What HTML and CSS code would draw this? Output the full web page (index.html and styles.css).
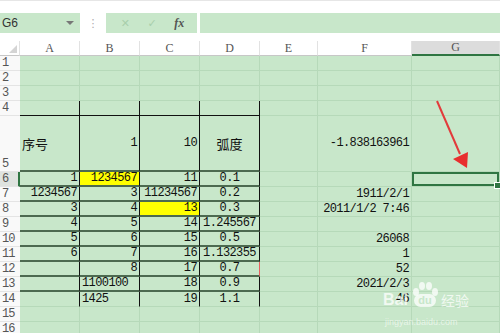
FILE: index.html
```html
<!DOCTYPE html>
<html lang="zh">
<head>
    <meta charset="UTF-8">
    <title>表格</title>
    <link rel="stylesheet" href="styles.css">
</head>
<body>
    <div class="toolbar">
        <div class="namebox">
            <span class="cellname">G6</span>
            <span class="drop"></span>
        </div>
        <div class="grip">⋮</div>
        <div class="fxbox">
            <span class="tool">✕</span>
            <span class="tool">✓</span>
            <span class="fx">fx</span>
        </div>
        <div class="formula"></div>
    </div>

    <table class="sheet">
        <colgroup>
            <col class="c-rh"><col class="c-a"><col class="c-b"><col class="c-c"><col class="c-d"><col class="c-e"><col class="c-f"><col class="c-g">
        </colgroup>
        <tr class="head">
            <th class="corner"><span class="tri"></span></th>
            <th>A</th><th>B</th><th>C</th><th>D</th><th>E</th><th>F</th><th class="on">G</th>
        </tr>
        <tr><th class="rn">1</th><td></td><td></td><td></td><td></td><td></td><td></td><td></td></tr>
        <tr><th class="rn">2</th><td></td><td></td><td></td><td></td><td></td><td></td><td></td></tr>
        <tr><th class="rn">3</th><td></td><td></td><td></td><td></td><td></td><td></td><td></td></tr>
        <tr class="above">
            <th class="rn">4</th><td class="tb"></td><td class="tb"></td><td class="tb"></td><td class="tb"></td><td></td><td></td><td></td>
        </tr>
        <tr class="tall">
            <th class="rn low">5</th>
            <td class="tb cn">序号</td><td class="tb num">1</td><td class="tb num">10</td><td class="tb mid cn">弧度</td>
            <td></td><td class="num">-1.838163961</td><td></td>
        </tr>
        <tr>
            <th class="rn cur">6</th>
            <td class="tb num">1</td><td class="tb num hl">1234567</td><td class="tb num">11</td><td class="tb mid">0.1</td>
            <td></td><td></td><td class="sel"></td>
        </tr>
        <tr>
            <th class="rn">7</th>
            <td class="tb num">1234567</td><td class="tb num">3</td><td class="tb num">11234567</td><td class="tb mid">0.2</td>
            <td></td><td class="num">1911/2/1</td><td></td>
        </tr>
        <tr>
            <th class="rn">8</th>
            <td class="tb num">3</td><td class="tb num">4</td><td class="tb num hl">13</td><td class="tb mid">0.3</td>
            <td></td><td class="num">2011/1/2 7:46</td><td></td>
        </tr>
        <tr>
            <th class="rn">9</th>
            <td class="tb num">4</td><td class="tb num">5</td><td class="tb num">14</td><td class="tb mid">1.245567</td>
            <td></td><td></td><td></td>
        </tr>
        <tr>
            <th class="rn">10</th>
            <td class="tb num">5</td><td class="tb num">6</td><td class="tb num">15</td><td class="tb mid">0.5</td>
            <td></td><td class="num">26068</td><td></td>
        </tr>
        <tr>
            <th class="rn">11</th>
            <td class="tb num">6</td><td class="tb num">7</td><td class="tb num">16</td><td class="tb mid">1.132355</td>
            <td></td><td class="num">1</td><td></td>
        </tr>
        <tr>
            <th class="rn">12</th>
            <td class="tb"></td><td class="tb num">8</td><td class="tb num">17</td><td class="tb mid flag">0.7</td>
            <td></td><td class="num">52</td><td></td>
        </tr>
        <tr>
            <th class="rn">13</th>
            <td class="tb"></td><td class="tb">1100100</td><td class="tb num">18</td><td class="tb mid">0.9</td>
            <td></td><td class="num">2021/2/3</td><td></td>
        </tr>
        <tr class="last">
            <th class="rn">14</th>
            <td class="tb"></td><td class="tb">1425</td><td class="tb num">19</td><td class="tb mid">1.1</td>
            <td></td><td class="num">46</td><td></td>
        </tr>
        <tr><th class="rn">15</th><td></td><td></td><td></td><td></td><td></td><td></td><td></td></tr>
        <tr><th class="rn">16</th><td></td><td></td><td></td><td></td><td></td><td></td><td></td></tr>
    </table>

    <svg class="arrow" width="500" height="333" viewBox="0 0 500 333">
        <line x1="437" y1="101" x2="460" y2="154" stroke="#e23b3b" stroke-width="2"/>
        <polygon points="467,168 453,159 468,152" fill="#e82e2e"/>
    </svg>

    <div class="mark">
        <span class="bai">Bai</span>
        <span class="paw">
            <i class="toe t1"></i><i class="toe t2"></i><i class="toe t3"></i><i class="toe t4"></i>
            <span class="pad">du</span>
        </span>
        <span class="jy">经验</span>
        <span class="url">jingyan.baidu.com</span>
    </div>
</body>
</html>
```
FILE: styles.css
```css
body {
    margin: 0;
    width: 500px;
    height: 333px;
    overflow: hidden;
    background-color: #ffffff;
    font-family: "Liberation Mono", monospace;
    position: relative;
}

.toolbar {
    display: flex;
    align-items: center;
    height: 20px;
    padding-top: 12px;
    margin-bottom: 8px;
    border-top: 1px solid #e6e6e6;
    box-sizing: content-box;
}

.namebox {
    width: 80px;
    height: 20px;
    background-color: #c8e7ca;
    display: flex;
    align-items: center;
    justify-content: space-between;
    box-sizing: border-box;
    padding: 0 6px 0 2px;
}

.cellname {
    font-family: "Liberation Sans", sans-serif;
    font-size: 12px;
    color: #333;
}

.drop {
    width: 0;
    height: 0;
    border-left: 4px solid transparent;
    border-right: 4px solid transparent;
    border-top: 4px solid #777;
}

.grip {
    width: 26px;
    text-align: center;
    color: #aaa;
    font-size: 11px;
    font-family: "DejaVu Sans", sans-serif;
}

.fxbox {
    width: 91px;
    height: 20px;
    background-color: #c8e7ca;
    display: flex;
    align-items: center;
    justify-content: space-around;
    padding: 0 4px 0 6px;
    box-sizing: border-box;
}

.tool {
    color: #a9cfac;
    font-size: 11px;
    font-family: "DejaVu Sans", sans-serif;
}

.fx {
    font-family: "Liberation Serif", serif;
    font-style: italic;
    font-weight: bold;
    font-size: 12px;
    color: #555;
}

.formula {
    flex: 1;
    height: 20px;
    margin-left: 3px;
    background-color: #c8e7ca;
}

.sheet {
    table-layout: fixed;
    border-collapse: separate;
    border-spacing: 0;
    width: 500px;
}

.c-rh { width: 20px; }
.c-a, .c-b, .c-c, .c-d { width: 60px; }
.c-e { width: 58px; }
.c-f { width: 94px; }
.c-g { width: 88px; }

th, td {
    box-sizing: border-box;
    height: 15px;
    padding: 0 2px;
    white-space: nowrap;
    overflow: visible;
    font-weight: normal;
    line-height: 13px;
}

td {
    background-color: #c8e7ca;
    border-right: 1px solid #b6d9b9;
    border-bottom: 1px solid #b6d9b9;
    font-size: 12px;
    letter-spacing: -0.6px;
    color: #111;
}

.head th {
    height: 14px;
    background-color: #ffffff;
    font-family: "Liberation Serif", serif;
    font-size: 12px;
    color: #555;
    border-right: 1px solid #e2e2e2;
    border-bottom: 1px solid #c7c7c7;
}

.head th.on {
    background-color: #dcdcdc;
    border-bottom: 2px solid #2f7542;
}

.corner {
    position: relative;
}

.tri {
    position: absolute;
    right: 2px;
    bottom: 2px;
    width: 0;
    height: 0;
    border-left: 8px solid transparent;
    border-bottom: 8px solid #d4d4d4;
}

.rn {
    background-color: #f9f9f9;
    border-bottom: 1px solid #e4e4e4;
    text-align: left;
    font-size: 12px;
    letter-spacing: -1px;
    color: #555;
    padding: 0 0 0 2px;
}

.rn.cur {
    background-color: #dfe3df;
    border-right: 2px solid #2f7542;
}

.rn.low {
    vertical-align: bottom;
}

.tall td, .tall th {
    height: 56px;
}

.num {
    text-align: right;
}

.mid {
    text-align: center;
}

.cn {
    font-family: "Noto Sans CJK SC", sans-serif;
    font-size: 13px;
    letter-spacing: 0;
}

.tb {
    border-right: 1px solid #111;
    border-bottom: 2px solid #4c6a50;
}

.above .tb {
    border-bottom: 1px solid #111;
}

.last .tb {
    border-bottom: 1px solid #b6d9b9;
}

.hl {
    background-color: #ffff00;
}

.flag {
    border-right-color: #e86060;
}

.sel {
    position: relative;
    box-shadow: inset 0 0 0 2px #2f7542;
}

.sel::after {
    content: "";
    position: absolute;
    right: -2px;
    bottom: -3px;
    width: 5px;
    height: 5px;
    background-color: #2f7542;
    border: 1px solid #fff;
}

.arrow {
    position: absolute;
    left: 0;
    top: 0;
}

.mark {
    position: absolute;
    left: 383px;
    top: 280px;
    width: 110px;
    height: 50px;
    color: rgba(255, 255, 255, 0.75);
}

.bai {
    position: absolute;
    left: 0;
    top: 11px;
    font-family: "Liberation Sans", sans-serif;
    font-weight: bold;
    font-size: 16px;
}

.paw {
    position: absolute;
    left: 28px;
    top: 0;
    width: 28px;
    height: 28px;
}

.toe {
    position: absolute;
    width: 6px;
    height: 8px;
    border-radius: 50%;
    background-color: rgba(255, 255, 255, 0.75);
}

.t1 { left: 2px; top: 8px; }
.t2 { left: 8px; top: 2px; }
.t3 { left: 15px; top: 2px; }
.t4 { left: 21px; top: 8px; }

.pad {
    position: absolute;
    left: 3px;
    top: 14px;
    width: 22px;
    height: 13px;
    border-radius: 7px;
    background-color: rgba(255, 255, 255, 0.75);
    color: #c8e7ca;
    font-family: "Liberation Sans", sans-serif;
    font-weight: bold;
    font-size: 11px;
    line-height: 13px;
    text-align: center;
}

.jy {
    position: absolute;
    left: 58px;
    top: 12px;
    font-family: "Noto Sans CJK SC", sans-serif;
    font-size: 14px;
    line-height: 16px;
}

.url {
    position: absolute;
    left: 2px;
    top: 37px;
    font-family: "Liberation Sans", sans-serif;
    font-size: 9px;
    color: rgba(255, 255, 255, 0.6);
}
```
